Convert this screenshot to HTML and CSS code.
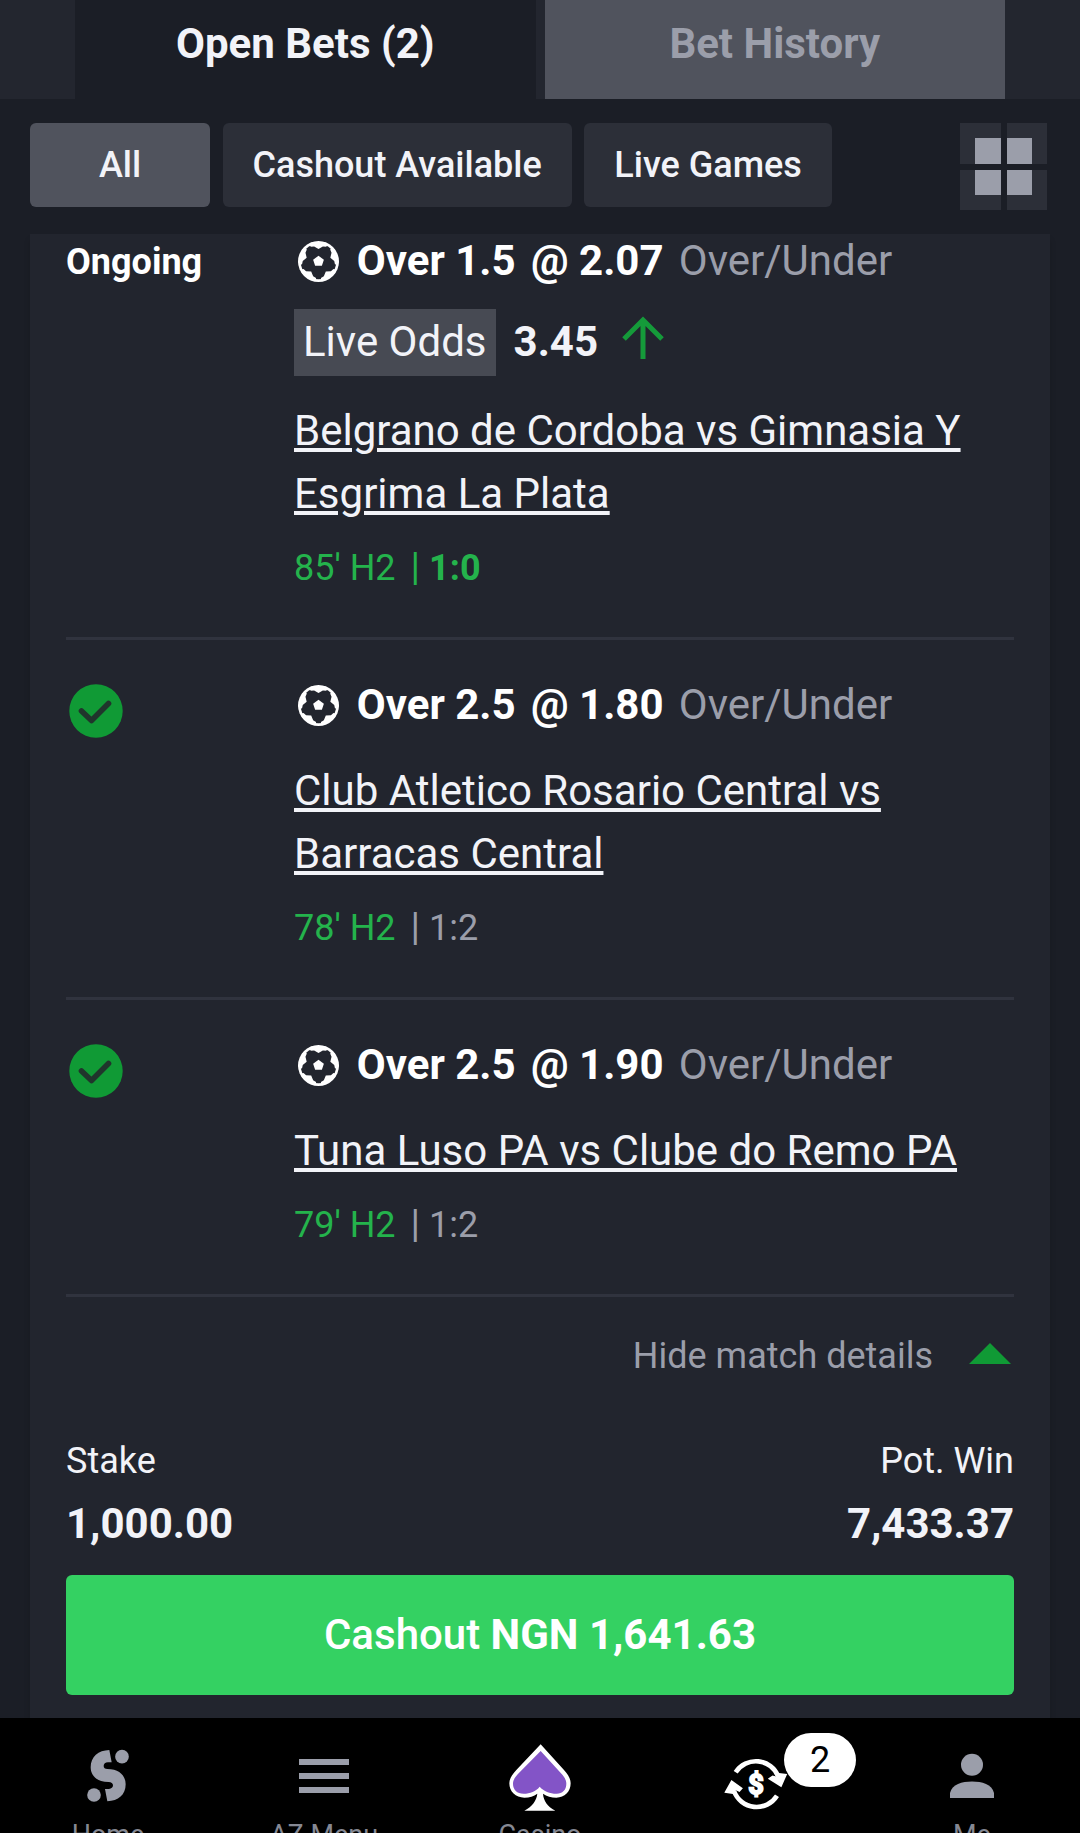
FILE: index.html
```html
<!doctype html>
<html lang="en">

<head>
  <meta charset="UTF-8" />
  <meta name="viewport" content="width=device-width, initial-scale=1.0" />
  <title>Open Bets</title>
  <link rel="stylesheet" href="styles.css">
</head>

<body>
  <!-- shared icons -->
  <svg class="sprite">
    <symbol id="ball" viewBox="-61 -61 122 122">
      <circle r="61" fill="#fff" />
      <circle r="53" fill="#22252e" />
      <g fill="#fff">
        <path id="patch" d="M-27-50-23-44-13-45 0-37 13-45 23-44 27-50 20-57H-20Z" />
        <use href="#patch" transform="rotate(72)" />
        <use href="#patch" transform="rotate(144)" />
        <use href="#patch" transform="rotate(216)" />
        <use href="#patch" transform="rotate(288)" />
        <path d="M0-17 16-5 10 13H-10L-16-5Z" />
      </g>
    </symbol>
    <symbol id="check" viewBox="0 0 54 54">
      <circle cx="27" cy="27" r="26.7" fill="#109a35" />
      <path d="M12.5 27 22.5 36.5 39.5 19.5" fill="none" stroke="#20352c" stroke-width="5.6" stroke-linecap="round" stroke-linejoin="round" />
    </symbol>
  </svg>

  <header class="tabs">
    <a class="tab active">Open Bets (2)</a>
    <a class="tab">Bet History</a>
  </header>

  <div class="filters">
    <button class="filter all active">All</button>
    <button class="filter">Cashout Available</button>
    <button class="filter">Live Games</button>
    <div class="grid-toggle">
      <span></span>
      <span></span>
      <span></span>
      <span></span>
    </div>
  </div>

  <main class="card">
    <section class="bet first">
      <div class="state">Ongoing</div>
      <div class="details">
        <div class="pick">
          <svg class="ball"><use href="#ball" /></svg>
          <b>Over 1.5</b>
          <b>@ 2.07</b>
          <span class="market">Over/Under</span>
        </div>
        <div class="live-odds">
          <span class="chip">Live Odds</span>
          <b>3.45</b>
          <svg class="arrow" viewBox="0 0 42 43">
            <path d="M21 43V4M2 23 21 4 40 23" fill="none" stroke="#159a3a" stroke-width="5" />
          </svg>
        </div>
        <a class="teams">Belgrano de Cordoba vs Gimnasia Y Esgrima La Plata</a>
        <div class="status live"><span class="time">85' H2</span><span><span class="bar">|</span> <b>1:0</b></span></div>
      </div>
    </section>

    <section class="bet">
      <div class="state"><svg class="check"><use href="#check" /></svg></div>
      <div class="details">
        <div class="pick">
          <svg class="ball"><use href="#ball" /></svg>
          <b>Over 2.5</b>
          <b>@ 1.80</b>
          <span class="market">Over/Under</span>
        </div>
        <a class="teams">Club Atletico Rosario Central vs Barracas Central</a>
        <div class="status"><span class="time">78' H2</span><span><span class="bar">|</span> 1:2</span></div>
      </div>
    </section>

    <section class="bet">
      <div class="state"><svg class="check"><use href="#check" /></svg></div>
      <div class="details">
        <div class="pick">
          <svg class="ball"><use href="#ball" /></svg>
          <b>Over 2.5</b>
          <b>@ 1.90</b>
          <span class="market">Over/Under</span>
        </div>
        <a class="teams">Tuna Luso PA vs Clube do Remo PA</a>
        <div class="status"><span class="time">79' H2</span><span><span class="bar">|</span> 1:2</span></div>
      </div>
    </section>

    <div class="toggle">
      <span>Hide match details</span>
      <svg class="triangle" viewBox="0 0 42 21"><path d="M21 0 42 21H0Z" fill="#109a35" /></svg>
    </div>

    <div class="totals">
      <div>
        <p class="label">Stake</p>
        <p class="amount">1,000.00</p>
      </div>
      <div class="win">
        <p class="label">Pot. Win</p>
        <p class="amount">7,433.37</p>
      </div>
    </div>

    <button class="cashout">Cashout <b>NGN 1,641.63</b></button>
  </main>

  <nav class="bottom-nav">
    <a class="nav-item">
      <svg viewBox="0 0 120 101">
        <g transform="translate(22 17) scale(.3333)" fill="#9b9eaa">
          <path d="M118 45 125 82H114C106 82 101 87 101 93S105 102 112 102C148 102 167 122 167 148C167 180 145 198 112 199L105 162H117C124 162 129 157 129 151S124 141 116 141C81 141 62 122 62 97C62 65 85 46 118 45Z" />
          <circle cx="156" cy="65" r="20.5" />
          <circle cx="72" cy="180" r="20.5" />
        </g>
      </svg>
      <span>Home</span>
    </a>
    <a class="nav-item">
      <svg viewBox="0 0 120 101">
        <path d="M35 41h50v6H35zM35 55h50v6H35zM35 69h50v6H35z" fill="#9b9eaa" />
      </svg>
      <span>AZ Menu</span>
    </a>
    <a class="nav-item">
      <svg viewBox="0 0 120 101">
        <g transform="translate(0 7) scale(.3333)">
          <path d="M182 58 252 135C266 151 272 162 272 175C272 200 254 218 229 218C214 218 200 214 189 206C191 228 201 243 226 257H133C158 243 169 228 172 206C161 214 149 218 133 218C107 218 88 200 88 175C88 162 95 150 109 135Z" fill="#fff" />
          <path d="M182 78 243 145C254 157 259 166 259 176C259 195 247 206 230 206C209 206 192 199 179 185C168 199 150 206 131 206C111 206 99 194 99 176C99 166 105 156 116 145Z" fill="#8354c7" />
        </g>
      </svg>
      <span>Casino</span>
    </a>
    <a class="nav-item">
      <svg viewBox="0 0 120 101">
        <g transform="translate(4 -8) scale(.3333)">
          <path d="M107 187A72 72 0 0 1 235 200M231 257A72 72 0 0 1 102 243" fill="none" stroke="#fff" stroke-width="14" />
          <path d="M208 206 218 199 231 203 238 192 258 194 243 228ZM77 246 95 214 125 235 118 243 107 238 98 249Z" fill="#fff" stroke="#fff" stroke-width="5" />
        </g>
        <text class="dollar" x="60" y="75.5">$</text>
      </svg>
      <i class="badge">2</i>
    </a>
    <a class="nav-item">
      <svg viewBox="0 0 120 101">
        <circle cx="60" cy="46.7" r="11" fill="#9b9eaa" />
        <path d="M38 80V75C40 66 50 63.500 60 63.500S80 66 82 75V80Z" fill="#9b9eaa" />
      </svg>
      <span>Me</span>
    </a>
  </nav>
</body>

</html>
```
FILE: styles.css
```css
* {
  box-sizing: border-box;
}

body {
  margin: 0;
  height: 1833px;
  display: flex;
  flex-direction: column;
  overflow: hidden;
  background-color: #1b1e26;
  color: #f2f3f8;
  font-family: Roboto, "Liberation Sans", sans-serif;
  font-size: 42px;
  line-height: 63px;
}

p {
  margin: 0;
}

button {
  border: none;
  padding: 0;
  color: inherit;
  font-family: inherit;
}

svg {
  display: block;
  flex-shrink: 0;
}

.sprite {
  position: absolute;
  width: 0;
  height: 0;
}

/* tabs */
.tabs {
  display: flex;
  flex-shrink: 0;
  gap: 9px;
  height: 99px;
  padding: 0 75px;
  background-color: #23262f;
}

.tab {
  flex: 1;
  background-color: #50535d;
  color: #9b9eaa;
  font-weight: 700;
  line-height: 87px;
  text-align: center;
}

.tab.active {
  background-color: #1b1e26;
  color: #f2f3f8;
}

/* filters */
.filters {
  display: flex;
  flex-shrink: 0;
  gap: 12.5px;
  height: 135px;
  padding: 24px 33px 0 30px;
}

.filter {
  height: 84px;
  padding: 0 30px;
  border-radius: 6px;
  background-color: #2c2f38;
  font-size: 36px;
  font-weight: 500;
  line-height: 83px;
}

.filter.all {
  width: 180px;
}

.filter.active {
  background-color: #50535d;
}

.grid-toggle {
  display: grid;
  grid-template-columns: 41px 40px;
  grid-template-rows: 41px 40px;
  gap: 6px;
  margin-left: auto;
  height: 87px;
}

.grid-toggle span {
  background-color: #9b9eaa;
  border: 0 solid #2c2f38;
}

.grid-toggle span:nth-child(1) {
  border-width: 15px 0 0 15px;
}

.grid-toggle span:nth-child(2) {
  border-width: 15px 15px 0 0;
}

.grid-toggle span:nth-child(3) {
  border-width: 0 0 15px 15px;
}

.grid-toggle span:nth-child(4) {
  border-width: 0 15px 15px 0;
}

/* bet card */
.card {
  flex: 1;
  margin: 0 30px;
  padding: 0 36px;
  background-color: #22252e;
  box-shadow: 0 6px 6px rgba(0, 0, 0, 0.15);
}

.bet {
  display: flex;
  padding: 33px 0 42px;
  border-bottom: 3px solid #30333e;
}

/* the list is scrolled a little under the filters */
.bet.first {
  margin-top: -5px;
  padding-top: 0;
}

.state {
  width: 228px;
  color: #fff;
  font-size: 36px;
  font-weight: 700;
  line-height: 54px;
}

.first .state {
  padding-top: 6px;
}

.check {
  width: 54px;
  height: 54px;
  margin: 11px 0 0 3px;
}

.details {
  flex: 1;
}

.pick {
  display: flex;
  align-items: center;
  gap: 15.3px;
  color: #fff;
}

.ball {
  width: 41px;
  height: 41px;
  margin: 2px 3px 0 3.5px;
}

.market {
  color: #9b9eaa;
}

.live-odds {
  display: flex;
  align-items: center;
  margin-top: 17px;
}

.chip {
  height: 67px;
  margin-right: 18px;
  padding: 0 9px;
  background-color: #474a53;
  line-height: 65px;
}

.live-odds b {
  margin-top: -2px;
  line-height: 65px;
}

.arrow {
  width: 42px;
  height: 43px;
  margin: -10px 0 0 24px;
}

.teams {
  display: block;
  margin: 23px 0 16px;
  text-decoration: underline;
}

.status {
  display: flex;
  gap: 15px;
  height: 54px;
  color: #9b9eaa;
  font-size: 36px;
  line-height: 54px;
}

.bar {
  font-size: 39px;
  line-height: 1;
}

.time,
.status.live {
  color: #24b34c;
}

.toggle {
  display: flex;
  justify-content: flex-end;
  align-items: center;
  gap: 36px;
  padding: 32px 3px 0 0;
  color: #9b9eaa;
  font-size: 36px;
  line-height: 54px;
}

.triangle {
  width: 42px;
  height: 21px;
  margin-top: -6px;
}

.totals {
  display: flex;
  justify-content: space-between;
  margin-top: 51px;
}

.win {
  text-align: right;
}

.label {
  font-size: 36px;
  line-height: 54px;
}

.amount {
  margin-top: 4px;
  font-weight: 700;
}

.cashout {
  display: block;
  width: 100%;
  height: 120px;
  margin-top: 20px;
  border-radius: 6px;
  background-color: #34d162;
  color: #fff;
  font-size: 42px;
  font-weight: 500;
  line-height: 118px;
}

.cashout b {
  font-weight: 700;
}

/* bottom navigation */
.bottom-nav {
  display: flex;
  flex-shrink: 0;
  height: 115px;
  overflow: hidden;
  background-color: #000;
}

.nav-item {
  position: relative;
  display: flex;
  flex: 1;
  flex-direction: column;
  align-items: center;
  color: #858893;
  font-size: 27px;
  line-height: 32px;
}

.nav-item svg {
  width: 120px;
  height: 101px;
}

.dollar {
  fill: #fff;
  stroke: #fff;
  stroke-width: 2;
  font-size: 27px;
  font-weight: 700;
  text-anchor: middle;
}

.badge {
  position: absolute;
  top: 15px;
  left: 136px;
  width: 72px;
  height: 54px;
  border-radius: 27px;
  background-color: #fff;
  color: #000;
  font-size: 36px;
  font-style: normal;
  line-height: 55px;
  text-align: center;
}
```
